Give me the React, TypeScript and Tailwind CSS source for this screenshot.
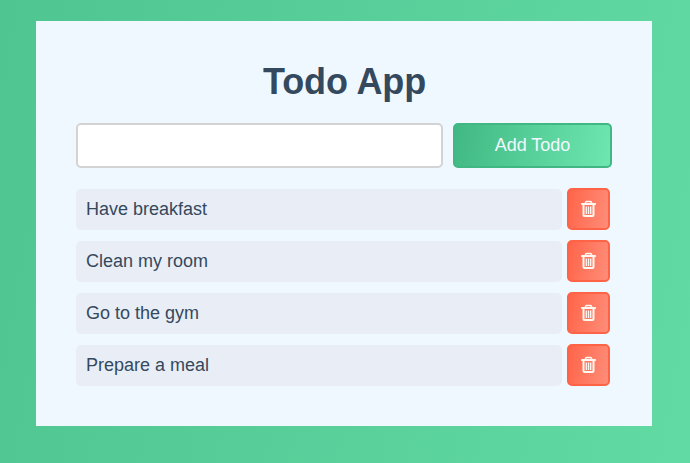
import { useState } from "react";

const initialTodos = ["Have breakfast", "Clean my room", "Go to the gym", "Prepare a meal"];

function TrashIcon() {
  return (
    <svg width="15" height="18" viewBox="0 0 15 18" fill="none" stroke="#fff8f2" aria-hidden="true">
      <path d="M4.5 4V2.7Q4.5 1.5 5.7 1.5H9.3Q10.5 1.5 10.5 2.7V4" strokeWidth="1.6" />
      <path d="M0.2 4H14.8" strokeWidth="2" />
      <path d="M2.5 5V15Q2.5 16 3.5 16H11.5Q12.5 16 12.5 15V5" strokeWidth="2" />
      <path d="M5.3 6.4V14M7.5 6.4V14M9.7 6.4V14" strokeWidth="1.3" />
    </svg>
  );
}

export default function App() {
  const [todos, setTodos] = useState(initialTodos);
  const [text, setText] = useState("");

  const addTodo = () => {
    if (!text.trim()) return;
    setTodos([...todos, text.trim()]);
    setText("");
  };

  return (
    <div className="min-h-screen bg-[linear-gradient(100deg,#4fc591,#62daa3)] pt-[21px] pr-[38px] pb-[37px] pl-9 font-['Liberation_Sans',Arial,sans-serif] text-[#34495e]">
      <main className="min-h-[405px] bg-[#f0f8ff] px-10 pt-10 pb-10">
        <h1 className="h-[62px] pl-px text-center text-[36px] leading-[42px] font-bold tracking-[-0.1px]">Todo App</h1>
        <div className="flex h-[45px] gap-2.5">
          <input
            className="w-[367px] rounded-[5px] border-2 border-[#d3d3d3] bg-white px-2.5 text-lg outline-none"
            value={text}
            onChange={(e) => setText(e.target.value)}
            aria-label="New todo"
          />
          <button
            className="w-[159px] rounded-[5px] border-2 border-[#41b883] bg-[linear-gradient(100deg,#41b883,#6ee7b0)] bg-origin-border pb-0.5 text-lg text-[#f0f8ff]"
            onClick={addTodo}
          >
            Add Todo
          </button>
        </div>
        <ul className="mt-5 flex flex-col gap-2.5">
          {todos.map((todo, index) => (
            <li key={index} className="flex h-[42px] items-end gap-[5px]">
              <span className="h-[41px] w-[486px] rounded-[5px] bg-[#e9eef6] px-2.5 text-lg leading-10">
                {todo}
              </span>
              <button
                className="flex h-[42px] w-[43px] items-center justify-center rounded-[5px] border-2 border-[#ff6347] bg-[linear-gradient(100deg,#ff6347,#ff8f7b)] bg-origin-border"
                aria-label="Delete todo"
                onClick={() => setTodos(todos.filter((_, i) => i !== index))}
              >
                <TrashIcon />
              </button>
            </li>
          ))}
        </ul>
      </main>
    </div>
  );
}
